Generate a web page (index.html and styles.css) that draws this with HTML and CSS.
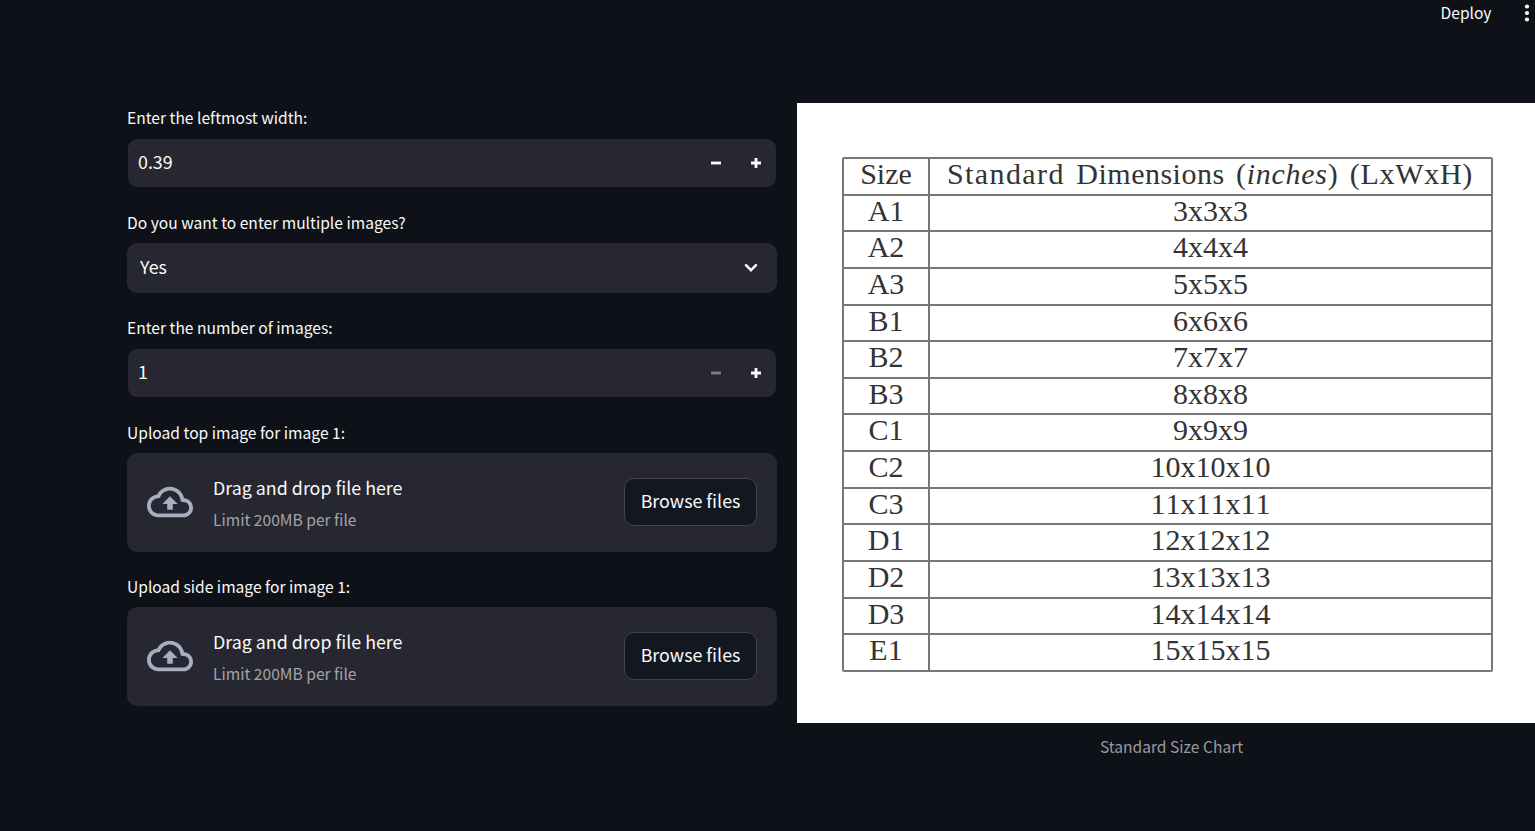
FILE: index.html
```html
<!DOCTYPE html>
<html lang="en">
<head>
<meta charset="utf-8">
<title>Standard Size Chart</title>
<link rel="stylesheet" href="styles.css">
</head>
<body>
<svg class="sprite" aria-hidden="true">
  <symbol id="cloud" viewBox="0 0 24 24"><path d="M19.35 10.04C18.67 6.59 15.64 4 12 4 9.11 4 6.6 5.64 5.35 8.04 2.34 8.36 0 10.91 0 14c0 3.31 2.69 6 6 6h13c2.76 0 5-2.24 5-5 0-2.64-2.05-4.78-4.65-4.96zM19 18H6c-2.21 0-4-1.79-4-4 0-2.05 1.53-3.76 3.56-3.97l1.07-.11.5-.95C8.08 7.14 9.94 6 12 6c2.62 0 4.88 1.86 5.39 4.43l.3 1.5 1.53.11c1.56.1 2.78 1.41 2.78 2.96 0 1.65-1.35 3-3 3zM8 13h2.55v3h2.9v-3H16l-4-4z"/></symbol>
  <symbol id="minus" viewBox="0 0 10 10"><path d="M0 3.6h10v2.8H0z"/></symbol>
  <symbol id="plus" viewBox="0 0 10 10"><path d="M0 3.6h3.6V0h2.8v3.6H10v2.8H6.4V10H3.6V6.4H0z"/></symbol>
</svg>
<header class="toolbar">
  <span class="deploy">Deploy</span>
  <svg class="menu" viewBox="0 0 6 18"><circle cx="3" cy="2.5" r="2.1"/><circle cx="3" cy="9" r="2.1"/><circle cx="3" cy="15.5" r="2.1"/></svg>
</header>
<main class="columns">
  <section class="form">
    <div class="field">
      <label class="label">Enter the leftmost width:</label>
      <div class="number"><span class="value">0.39</span><svg class="step"><use href="#minus"/></svg><svg class="step"><use href="#plus"/></svg></div>
    </div>
    <div class="field">
      <label class="label">Do you want to enter multiple images?</label>
      <div class="select"><span class="value">Yes</span><svg class="chevron" viewBox="0 0 14 10"><path d="M2 2.2 7 7.2l5-5"/></svg></div>
    </div>
    <div class="field">
      <label class="label">Enter the number of images:</label>
      <div class="number"><span class="value">1</span><svg class="step disabled"><use href="#minus"/></svg><svg class="step"><use href="#plus"/></svg></div>
    </div>
    <div class="field">
      <label class="label">Upload top image for image 1:</label>
      <div class="upload"><svg class="cloud"><use href="#cloud"/></svg><div class="hint"><span class="drag">Drag and drop file here</span><span class="limit">Limit 200MB per file</span></div><button class="browse">Browse files</button></div>
    </div>
    <div class="field">
      <label class="label">Upload side image for image 1:</label>
      <div class="upload"><svg class="cloud"><use href="#cloud"/></svg><div class="hint"><span class="drag">Drag and drop file here</span><span class="limit">Limit 200MB per file</span></div><button class="browse">Browse files</button></div>
    </div>
  </section>
  <figure class="figure">
    <div class="sheet">
      <div class="chart">
        <div class="row head"><span class="size">Size</span><span class="dim"><span class="std">Standard</span><span class="dimensions">Dimensions</span><span class="inches">(<i>inches</i>)</span><span class="lwh">(LxWxH)</span></span></div>
        <div class="row"><span class="size">A1</span><span class="dim">3x3x3</span></div>
        <div class="row"><span class="size">A2</span><span class="dim">4x4x4</span></div>
        <div class="row"><span class="size">A3</span><span class="dim">5x5x5</span></div>
        <div class="row"><span class="size">B1</span><span class="dim">6x6x6</span></div>
        <div class="row"><span class="size">B2</span><span class="dim">7x7x7</span></div>
        <div class="row"><span class="size">B3</span><span class="dim">8x8x8</span></div>
        <div class="row"><span class="size">C1</span><span class="dim">9x9x9</span></div>
        <div class="row"><span class="size">C2</span><span class="dim">10x10x10</span></div>
        <div class="row"><span class="size">C3</span><span class="dim elevens">11x11x11</span></div>
        <div class="row"><span class="size">D1</span><span class="dim">12x12x12</span></div>
        <div class="row"><span class="size">D2</span><span class="dim">13x13x13</span></div>
        <div class="row"><span class="size">D3</span><span class="dim">14x14x14</span></div>
        <div class="row"><span class="size">E1</span><span class="dim">15x15x15</span></div>
      </div>
    </div>
    <figcaption class="caption">Standard Size Chart</figcaption>
  </figure>
</main>
</body>
</html>
```
FILE: styles.css
```css
* { box-sizing: border-box; }
body {
  margin: 0;
  height: 831px;
  overflow: hidden;
  background: #0e1117;
  color: #fafafa;
  font-family: "Noto Sans CJK SC", "Open Sans", sans-serif;
  font-size: 17.85px;
}
.sprite { display: none; }
.toolbar {
  height: 103px;
  padding: 4px 5.5px 0 0;
  display: flex;
  justify-content: flex-end;
  align-items: flex-start;
  gap: 32px;
}
.deploy { font-size: 15.6px; line-height: 17px; }
.menu { width: 6px; height: 18px; fill: #fafafa; }
.columns {
  display: grid;
  grid-template-columns: 650px 749px;
  gap: 20px;
  padding-left: 127px;
  align-items: start;
}
.form { display: flex; flex-direction: column; gap: 25px; padding-top: 5px; }
.label { display: block; height: 20px; margin-bottom: 10px; font-size: 15.6px; line-height: 18px; white-space: nowrap; }
.number, .select { display: flex; align-items: center; height: 50px; background: #262730; border-radius: 10px; }
.number { border: 1px solid transparent; background-clip: padding-box; padding: 0 15px 0 10px; gap: 30px; }
.select { padding: 0 19px 0 13px; }
.value { flex: 1; line-height: 24px; padding-bottom: 5px; }
.step { width: 10px; height: 10px; fill: #fafafa; }
.disabled { fill: #7d7f8f; }
.chevron { width: 14px; height: 10px; fill: none; stroke: #fafafa; stroke-width: 2.5; stroke-linecap: round; }
.upload { height: 99px; padding: 0 20px 1px; display: flex; align-items: center; background: #262730; border-radius: 10px; }
.cloud { width: 46px; height: 46px; fill: #a9adc1; margin-right: 20px; }
.hint { flex: 1; display: flex; flex-direction: column; gap: 8px; padding-top: 2px; }
.drag { line-height: 24px; }
.limit { color: #a3a3a8; font-size: 15.6px; line-height: 24px; }
.browse {
  width: 133px;
  height: 48px;
  padding: 0 0 5px;
  border: 1px solid #41444c;
  border-radius: 10px;
  background: #131720;
  color: #fafafa;
  font: inherit;
  line-height: 24px;
}
.figure { margin: 0; }
.sheet { height: 620px; padding: 54px 0 0 45px; background: #fff; }
.chart {
  width: 651px;
  border: 2px solid #777;
  border-top-width: 0;
  border-bottom-width: 0;
  border-radius: 2px;
  color: #333;
  font: 30px/30px "Liberation Serif", serif;
}
.row { display: grid; grid-template-columns: 86px 1fr; height: 36.63px; border-top: 2px solid #777; text-align: center; }
.row:last-child { border-bottom: 2px solid #777; height: 38.6px; }
.size { border-right: 2px solid #777; }
.elevens { font-kerning: none; }
.head .dim { display: flex; justify-content: space-between; padding: 0 18px 0 17px; }
.head .std { letter-spacing: 1.4px; }
.head .dimensions { letter-spacing: 0.5px; }
.head .inches { letter-spacing: 0.7px; }
.head .lwh { letter-spacing: 0.7px; }
.caption { margin-top: 11px; text-align: center; color: #9a9b9e; font-size: 15.6px; line-height: 24px; }
```
